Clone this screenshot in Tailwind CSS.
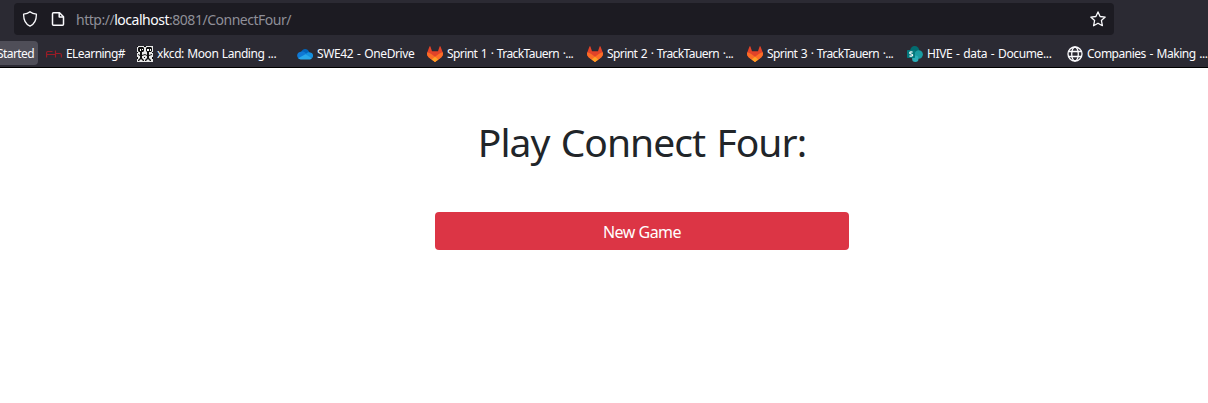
<!DOCTYPE html>
<html lang="en">
<head>
<meta charset="utf-8">
<title>Connect Four</title>
<script src="https://cdn.jsdelivr.net/npm/@tailwindcss/browser@4"></script>
</head>
<body class="bg-white font-['Noto_Sans',sans-serif] w-[1208px] h-[403px] overflow-hidden">
<svg class="hidden">
  <symbol id="fox" viewBox="0 0 16 16">
    <path fill="#e24329" d="M.3 6.200 2.500.6c.2-.5.8-.4 1 .1L5 5.300h6L12.500.7c.2-.5.8-.6 1-.1l2.200 5.600c.7 1.900.1 4-1.500 5.200L8 16 1.800 11.400C.2 10.200-.4 8.100.3 6.200z"/>
    <path fill="#fc6d26" d="M.3 6.200C1.700 6.500 3.100 7.200 4.300 8L8 10.800 11.700 8c1.200-.9 2.600-1.500 4-1.800.7 1.900.1 4-1.500 5.200L8 16 1.800 11.400C.2 10.200-.4 8.100.3 6.200z"/>
    <path fill="#fca326" d="M8 10.800 11.300 13.500 8 16 4.700 13.500z"/>
  </symbol>
</svg>
<header class="bg-[#2b2a33] h-[68px] border-b border-black text-[#fbfbfe]">
  <div class="h-[38px] pt-[3px] pl-[14px]">
    <div class="w-[1100px] h-8 rounded bg-[#1c1b22] flex items-center pl-2 pr-2">
      <svg class="w-4 h-4 shrink-0" viewBox="0 0 16 16" fill="none" stroke="#fbfbfe" stroke-width="1.300" stroke-linejoin="round"><path d="M8 .8c1.700 1.500 3.900 2.200 6.400 2.300C14.500 8.500 13 13 8 15.200 3 13 1.500 8.500 1.600 3.100 4.100 3 6.300 2.300 8 .8z"/></svg>
      <svg class="w-4 h-4 shrink-0 ml-3" viewBox="0 0 16 16" fill="none" stroke="#fbfbfe" stroke-width="1.500" stroke-linejoin="round"><path d="M3.500 1.700h6l4 4v7.600a1 1 0 0 1-1 1h-9a1 1 0 0 1-1-1V2.700a1 1 0 0 1 1-1z"/><path d="M9.200 1.700v4.300h4.300"/></svg>
      <div class="ml-[10px] mt-[2px] flex-1 text-[14px] leading-5 tracking-[-0.48px] text-[#8f8f98] whitespace-nowrap">http://<span class="text-[#fbfbfe]">localhost</span>:8081/ConnectFour/</div>
      <svg class="w-4 h-4 shrink-0" viewBox="0 0 16 16" fill="none" stroke="#fbfbfe" stroke-width="1.300" stroke-linejoin="round"><path d="m8 .9 2.100 4.600 5.100.6-3.800 3.400 1 5.200L8 12.200l-4.400 2.500 1-5.200L.8 6.100l5.100-.6z"/></svg>
    </div>
  </div>
  <nav class="h-[29px] flex items-start pt-[3px] text-[12px] leading-6 whitespace-nowrap overflow-hidden">
    <div class="w-[38px] h-6 shrink-0 bg-[#4f4e58] rounded-r flex justify-end pr-1 overflow-hidden"><span class="pt-px tracking-[-0.6px]">Started</span></div>
    <div class="w-[91px] ml-1 pl-1 shrink-0 flex items-center gap-1">
      <svg class="w-4 h-4 shrink-0" viewBox="0 0 16 16" fill="none" stroke="#9b1c26" stroke-width="1.200"><path d="M.6 11.500V6.500q0-1 1-1H6.500M0 8.500h9.500M9.500 4.500v7M9.500 7.500h4.500q1.400 0 1.400 1.400v2.600"/></svg>
      <span class="pt-px tracking-[-0.55px]">ELearning#</span>
    </div>
    <div class="w-[160px] pl-1 shrink-0 flex items-center gap-1">
      <svg class="w-4 h-4 shrink-0" viewBox="0 0 16 16"><path fill="#e8e8e8" d="M0 0h16v16H0z"/><g fill="#111"><path d="M2 1h4l1 1v3L6 6H2L1 5V2zM10 1h4l1 1v3l-1 1h-4L9 5V2zM4 6h1v3l3-1v1l-3 1v2l2 2v1H6l-2-2-2 2H1v-1l2-2v-2L1 9V8l2 1V6zM11 6h1v3l3-1v1l-3 1v2l2 2v1h-1l-2-2-2 2H8v-1l2-2v-2L8 9V8l2 1V6zM0 0h1v1H0zM7 0h2v1H7zM0 6h1v1H0zM15 6h1v1h-1zM0 11h1v2H0zM7 11h1v1H7zM15 11h1v2h-1z"/></g><path fill="#fff" d="M3 3h1v2H3zM5 3h1v1H5zM10 3h2v2h-2zM13 3h1v2h-1z"/></svg>
      <span class="pt-px tracking-[-0.45px] [word-spacing:0.8px]">xkcd: Moon Landing ...</span>
    </div>
    <div class="w-[130px] pl-1 shrink-0 flex items-center gap-1">
      <svg class="w-4 h-4 shrink-0" viewBox="0 0 16 16"><path fill="#0364b8" d="M4 6.500C5 2.200 10.500 1.200 12.500 6.500L8 9z"/><path fill="#0f78d4" d="M3.800 5.800C5.500 5.200 7 5.600 8 6.600l3 2.400-8.500 4C-.8 12-.8 6.200 3.800 5.800z"/><path fill="#1490df" d="M9 8c1-1.500 3-2 4-1.400 3.500.4 3.800 4 2 5.400L8 9z"/><path fill="#28a8ea" d="m1.200 12.300 7.200-4 6.700 3.800c-.6.9-1.200 1.300-2.100 1.300H3.600c-.9 0-1.700-.4-2.400-1.100z"/></svg>
      <span class="pt-px tracking-[-0.38px] [word-spacing:1px]">SWE42 - OneDrive</span>
    </div>
    <div class="w-[160px] pl-1 shrink-0 flex items-center gap-1"><svg class="w-4 h-4 shrink-0"><use href="#fox"/></svg><span class="pt-px tracking-[-0.58px] [word-spacing:1px]">Sprint 1 · TrackTauern ·...</span></div>
    <div class="w-[160px] pl-1 shrink-0 flex items-center gap-1"><svg class="w-4 h-4 shrink-0"><use href="#fox"/></svg><span class="pt-px tracking-[-0.58px] [word-spacing:1px]">Sprint 2 · TrackTauern ·...</span></div>
    <div class="w-[160px] pl-1 shrink-0 flex items-center gap-1"><svg class="w-4 h-4 shrink-0"><use href="#fox"/></svg><span class="pt-px tracking-[-0.58px] [word-spacing:1px]">Sprint 3 · TrackTauern ·...</span></div>
    <div class="w-[160px] pl-1 shrink-0 flex items-center gap-1">
      <svg class="w-4 h-4 shrink-0" viewBox="0 0 16 16"><circle cx="7.700" cy="4.700" r="4.600" fill="#036c70"/><circle cx="11.700" cy="8.500" r="4.200" fill="#1a9ba1"/><circle cx="8.300" cy="12.700" r="3.200" fill="#2aaeb8"/><rect y="4" width="8" height="8" rx=".7" fill="#03787c"/><path d="M5.600 6.300C4.800 5.700 2.700 5.600 2.700 6.900c0 1.200 3 .9 3 2.200 0 1.400-2.300 1.200-3.200.6" fill="none" stroke="#fff" stroke-width="1.200"/></svg>
      <span class="pt-px tracking-[-0.37px] [word-spacing:1px]">HIVE - data - Docume...</span>
    </div>
    <div class="w-[145px] pl-1 shrink-0 flex items-center gap-1">
      <svg class="w-4 h-4 shrink-0" viewBox="0 0 16 16" fill="none" stroke="#fbfbfe" stroke-width="1.300"><circle cx="8" cy="8" r="7"/><ellipse cx="8" cy="8" rx="3.300" ry="7"/><path d="M1.500 5.500h13M1.500 10.500h13"/></svg>
      <span class="pt-px tracking-[-0.48px] [word-spacing:1px]">Companies - Making ...</span>
    </div>
  </nav>
</header>
<main class="w-[414px] ml-[435px] pt-[50px] flex flex-col items-center text-[#212529]">
  <h1 class="text-[39px] leading-[48px] whitespace-nowrap tracking-[-0.95px] [word-spacing:2px]">Play Connect Four:</h1>
  <button class="mt-[46px] w-full h-[38px] rounded bg-[#dc3545] text-white text-[16px] leading-6 pt-[2px] tracking-[-0.5px]">New Game</button>
</main>
</body>
</html>
